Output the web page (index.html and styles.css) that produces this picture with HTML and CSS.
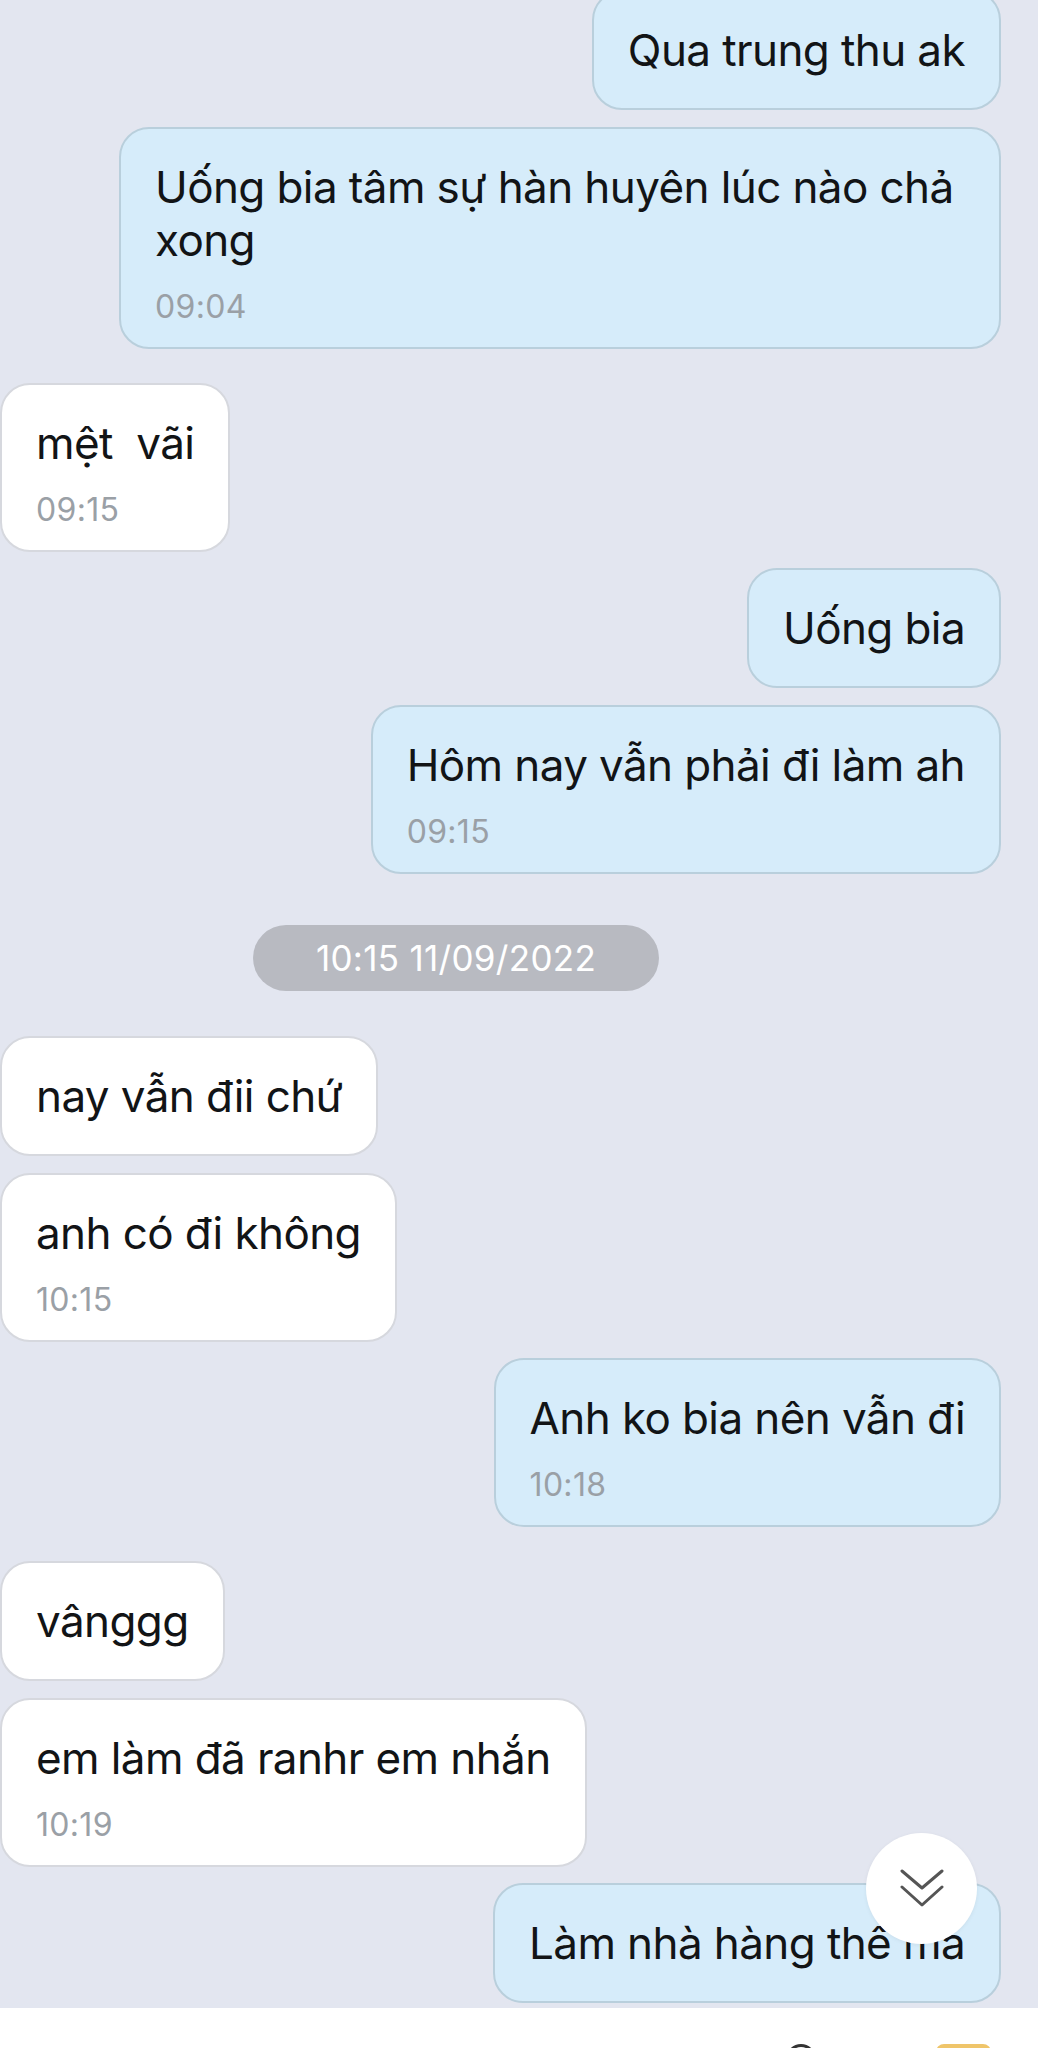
FILE: index.html
```html
<!DOCTYPE html>
<html lang="vi">
<head>
<meta charset="utf-8">
<title>Chat</title>
<link rel="stylesheet" href="styles.css">
</head>
<body>
<div class="screen">
  <div class="chat">
    <div class="msg sent"><p class="text">Qua trung thu ak</p></div>
    <div class="msg sent"><p class="text">Uống bia tâm sự hàn huyên lúc nào chả xong</p><div class="time">09:04</div></div>
    <div class="msg recv group"><p class="text">mệt&nbsp; vãi</p><div class="time">09:15</div></div>
    <div class="msg sent group-tight"><p class="text">Uống bia</p></div>
    <div class="msg sent"><p class="text">Hôm nay vẫn phải đi làm ah</p><div class="time">09:15</div></div>
    <div class="date"><span class="date-pill">10:15 11/09/2022</span></div>
    <div class="msg recv after-date"><p class="text">nay vẫn đii chứ</p></div>
    <div class="msg recv"><p class="text">anh có đi không</p><div class="time">10:15</div></div>
    <div class="msg sent group-tight"><p class="text">Anh ko bia nên vẫn đi</p><div class="time">10:18</div></div>
    <div class="msg recv group"><p class="text">vânggg</p></div>
    <div class="msg recv"><p class="text">em làm đã ranhr em nhắn</p><div class="time">10:19</div></div>
    <div class="msg sent group-tight"><p class="text">Làm nhà hàng thê ma</p></div>
  </div>
  <button class="scroll-down" aria-label="Scroll down">
    <svg width="44" height="40" viewBox="0 0 44 40" fill="none" stroke="#555" stroke-width="3" stroke-linecap="round" stroke-linejoin="round">
      <polyline points="2,2 22,19 42,2"/>
      <polyline points="2,18 22,36 42,18"/>
    </svg>
  </button>
  <div class="bottom-bar">
    <span class="icon-ring"></span>
    <span class="icon-gold"></span>
  </div>
</div>
</body>
</html>
```
FILE: styles.css
```css
* { box-sizing: border-box; }
html, body {
  margin: 0;
  padding: 0;
  background: #e3e6f0;
  font-family: "Inter", "Noto Sans", "Liberation Sans", sans-serif;
  overflow: hidden;
}
.screen {
  position: relative;
  width: 1038px;
  height: 2048px;
  overflow: hidden;
}
.chat {
  display: flex;
  flex-direction: column;
  gap: 17px;
  margin-top: -10px;
}
.msg {
  max-width: 882px;
  border-radius: 30px;
  border: 2px solid;
  padding: 32px 34px 31px 34px;
}
.sent {
  align-self: flex-end;
  margin-right: 37px;
  background: #d6ecfa;
  border-color: #b9cfdc;
}
.recv {
  align-self: flex-start;
  margin-left: 0;
  background: #ffffff;
  border-color: #d6d8de;
}
.group { margin-top: 17px; }
.group-tight { margin-top: -1px; }
.after-date { margin-top: 28px; }
.text {
  margin: 0;
  font-size: 44px;
  line-height: 53px;
  letter-spacing: -0.6px;
  color: #121416;
}
.time {
  margin-top: 30px;
  font-size: 32px;
  line-height: 19px;
  letter-spacing: 0.3px;
  color: #9aa0a6;
}
.date {
  display: flex;
  justify-content: flex-start;
  margin-top: 34px;
  padding-left: 253px;
}
.date-pill {
  width: 406px;
  height: 66px;
  border-radius: 33px;
  background: #b8bac1;
  color: #ffffff;
  font-size: 35px;
  letter-spacing: 0.3px;
  line-height: 66px;
  text-align: center;
}
.scroll-down {
  position: absolute;
  left: 866px;
  top: 1833px;
  width: 111px;
  height: 111px;
  border-radius: 50%;
  border: none;
  background: #ffffff;
  box-shadow: 0 1px 4px rgba(0, 0, 0, 0.06);
  display: flex;
  align-items: center;
  justify-content: center;
  padding: 0;
}
.bottom-bar {
  position: absolute;
  left: 0;
  right: 0;
  top: 2008px;
  height: 40px;
  background: #ffffff;
  display: flex;
  justify-content: flex-end;
  align-items: flex-start;
  gap: 120px;
  padding: 36px 47px 0 0;
}
.icon-ring {
  width: 30px;
  height: 30px;
  border: 3px solid #333;
  border-radius: 50%;
}
.icon-gold {
  width: 55px;
  height: 30px;
  border-radius: 8px;
  background: #efc56a;
}
```
